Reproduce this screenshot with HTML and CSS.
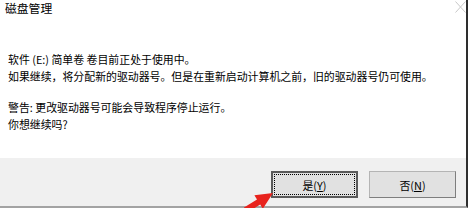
FILE: index.html
```html
<!DOCTYPE html>
<html lang="zh-CN">
<head>
<meta charset="utf-8">
<title>磁盘管理</title>
<link rel="stylesheet" href="styles.css">
</head>
<body>
<div class="dialog">
  <div class="titlebar">
    <span class="title">磁盘管理</span>
    <svg class="close" width="11" height="12" viewBox="0 0 11 12"><path d="M0.5 0.5 L10.5 11.5 M10.5 0.5 L0.5 11.5" stroke="#c9c9c9" stroke-width="1" fill="none"/></svg>
  </div>
  <div class="message">
    <p>软件 (E:) 简单卷 卷目前正处于使用中。<br>如果继续，将分配新的驱动器号。但是在重新启动计算机之前，旧的驱动器号仍可使用。</p>
    <p>警告: 更改驱动器号可能会导致程序停止运行。<br>你想继续吗?</p>
  </div>
  <div class="footer">
    <button class="btn btn-default"><span class="focus">是(<u>Y</u>)</span></button>
    <button class="btn">否(<u>N</u>)</button>
  </div>
  <svg class="arrow" width="30" height="18" viewBox="0 0 30 18"><polygon points="29,3 18.8,18.8 16.2,14.5 -0.8,25.1 -4,20 13,9.5 10.4,5.2" fill="#e8231d"/></svg>
</div>
</body>
</html>
```
FILE: styles.css
```css
html, body {
  margin: 0;
  padding: 0;
  background: #ffffff;
}
body {
  width: 468px;
  height: 208px;
  overflow: hidden;
  font-family: "Noto Sans CJK SC", "Noto Sans", sans-serif;
  color: #000;
}
.dialog {
  position: relative;
  width: 466px;
  height: 206px;
  border-right: 2px solid #2e2e2e;
  border-bottom: 2px solid #a3a3a3;
  background: #fff;
  display: flex;
  flex-direction: column;
}
.titlebar {
  height: 51px;
  display: flex;
  justify-content: space-between;
  align-items: flex-start;
  padding-left: 5px;
  box-sizing: border-box;
}
.title {
  font-size: 11.8px;
  line-height: 16px;
}
.close {
  display: block;
  margin-top: 1px;
}
.message {
  flex: 1;
  padding-left: 8px;
  font-size: 10.9px;
  line-height: 17px;
}
.message p {
  margin: 0 0 13.5px 0;
}
.footer {
  height: 48px;
  background: #f0f0f0;
  display: flex;
  justify-content: flex-end;
  align-items: flex-start;
  gap: 11px;
  padding: 13px 10px 0 0;
  box-sizing: border-box;
}
.btn {
  width: 87px;
  height: 27px;
  box-sizing: border-box;
  margin: 0;
  padding: 0;
  background: #e1e1e1;
  border: 1px solid #b4b4b4;
  border-right-color: #7e7e7e;
  border-bottom-color: #7e7e7e;
  font-family: "Noto Sans CJK SC", "Noto Sans", sans-serif;
  font-size: 10.9px;
  color: #000;
  display: flex;
  align-items: center;
  justify-content: center;
}
.btn-default {
  border: 2px solid #5a5a5a;
  padding: 1px;
}
.focus {
  flex: 1;
  align-self: stretch;
  display: flex;
  align-items: center;
  justify-content: center;
  border: 1px dotted #000;
}
.arrow {
  position: absolute;
  left: 244px;
  top: 190px;
  z-index: 2;
}
```
